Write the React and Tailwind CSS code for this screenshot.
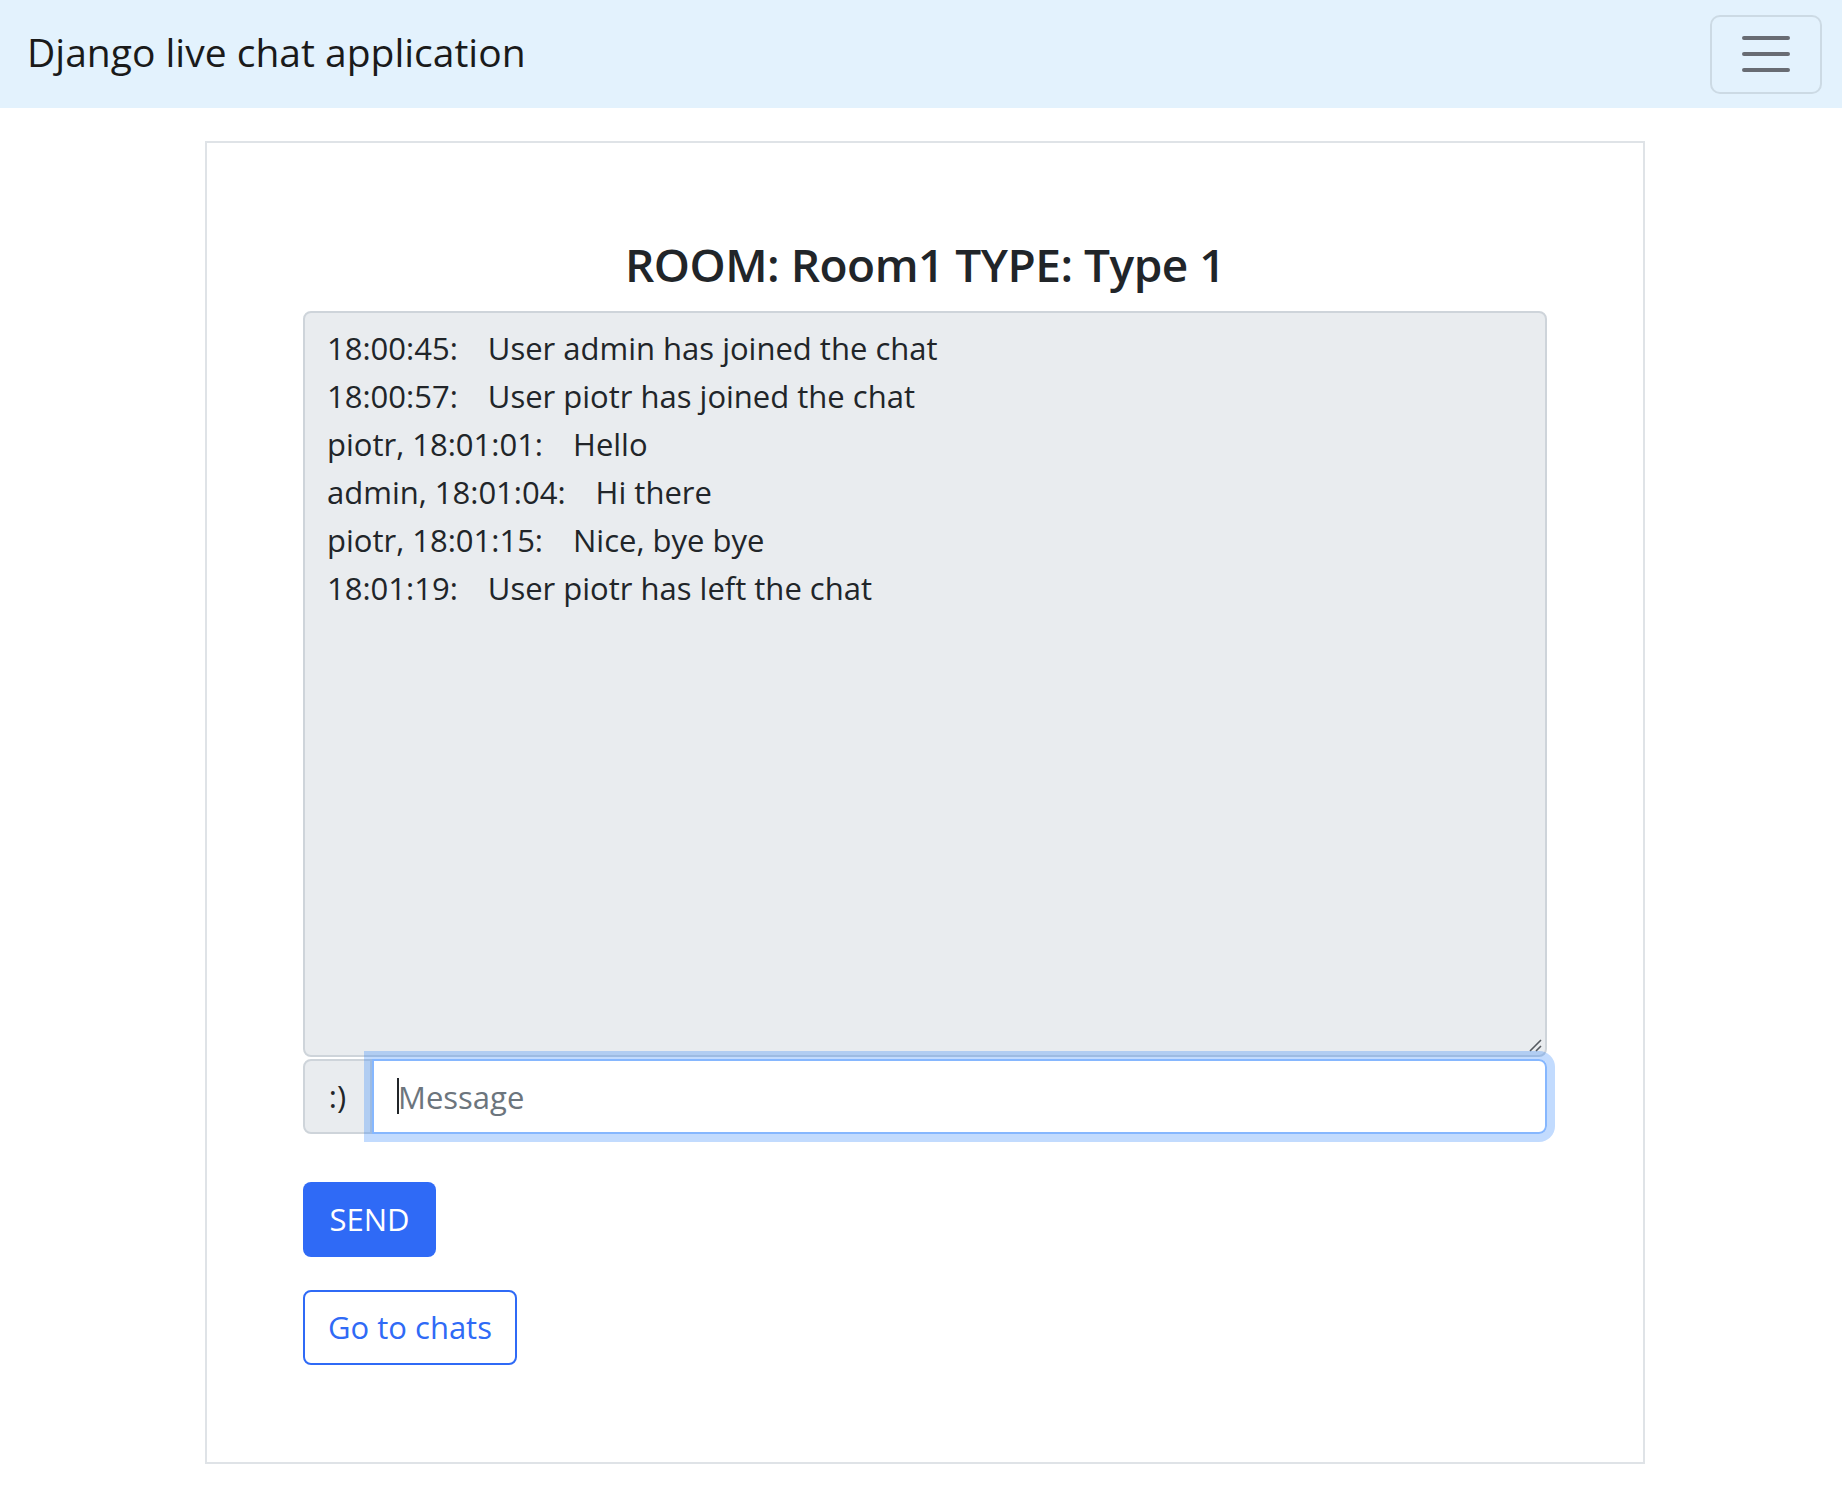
const MESSAGES = [
  ['18:00:45:', 'User admin has joined the chat'],
  ['18:00:57:', 'User piotr has joined the chat'],
  ['piotr, 18:01:01:', 'Hello'],
  ['admin, 18:01:04:', 'Hi there'],
  ['piotr, 18:01:15:', 'Nice, bye bye'],
  ['18:01:19:', 'User piotr has left the chat'],
];

function Hamburger() {
  return (
    <button className="w-[112px] h-[79px] rounded-[10px] border-2 border-[#ccdae4] flex items-center justify-center">
      <svg width="52" height="40" viewBox="0 0 52 40">
        <path d="M4 4h44M4 20h44M4 36h44" stroke="#686c73" strokeWidth="4" strokeLinecap="round" />
      </svg>
    </button>
  );
}

export default function App() {
  return (
    <div className="min-h-screen bg-white font-['Open_Sans',sans-serif] text-[#212529]">
      <nav className="h-[108px] bg-[#e3f2fd] flex items-center justify-between pl-[27px] pr-[20px]">
        <span className="text-[39px] leading-[56px] text-[#1a1a1a] pb-[4px]">Django live chat application</span>
        <Hamburger />
      </nav>

      <main className="pt-[33px] pb-[38px] pl-[8px]">
        <div className="mx-auto w-[1440px] border-2 border-[#dfe3e7] pt-[92px] pb-[97px] px-[96px]">
          <h3 className="text-center text-[46px] leading-[58px] font-semibold tracking-[-0.5px]">ROOM: Room1 TYPE: Type 1</h3>

          <div className="mt-[18px]">
            <div className="relative h-[746px] bg-[#e9ecef] border-2 border-[#ced4da] rounded-[8px] pt-[11px] pl-[22px] text-[31px] leading-[48px]">
              {MESSAGES.map(([who, text], i) => (
                <div key={i} className="whitespace-nowrap">
                  <span>{who}</span>
                  <span className="ml-[30px]">{text}</span>
                </div>
              ))}
              <svg className="absolute right-[3px] bottom-[3px]" width="14" height="14" viewBox="0 0 14 14">
                <path d="M2 13L13 2M8 13L13 8" stroke="#555a60" strokeWidth="1.6" />
              </svg>
            </div>

            <div className="flex mt-[2px] h-[75px]">
              <div className="w-[69px] shrink-0 bg-[#e9ecef] border-2 border-[#ced4da] rounded-l-[8px] flex items-center justify-center text-[31px] text-[#212529]">
                :)
              </div>
              <div className="relative flex-1 z-10 rounded-r-[8px] shadow-[0_0_0_8px_rgba(13,110,253,0.25)]">
                <input
                  className="w-full h-full bg-white border-2 border-[#86b7fe] rounded-r-[8px] pl-[24px] text-[31px] outline-none caret-transparent placeholder:text-[#6c757d]"
                  placeholder="Message"
                />
                <span className="absolute left-[25px] top-[19px] w-[2px] h-[36px] bg-[#212529] pointer-events-none" />
              </div>
            </div>

            <button className="mt-[48px] w-[133px] h-[75px] rounded-[8px] bg-[#2f6af6] text-white text-[31px] flex items-center justify-center">
              SEND
            </button>

            <button className="mt-[33px] w-[214px] h-[75px] rounded-[8px] border-2 border-[#2f6af6] bg-white text-[#2f6af6] text-[31px] flex items-center justify-center">
              Go to chats
            </button>
          </div>
        </div>
      </main>
    </div>
  );
}
